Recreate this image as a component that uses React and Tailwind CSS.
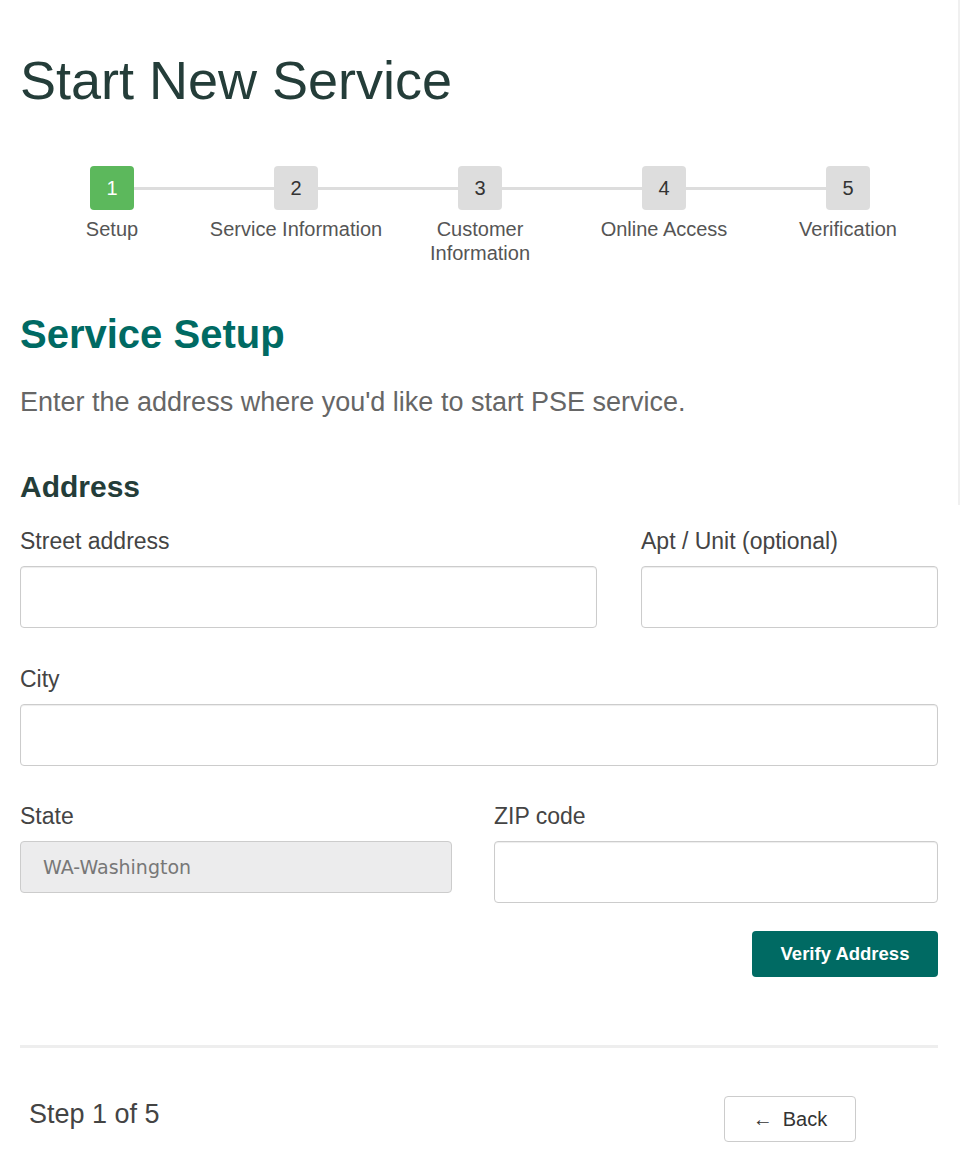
import React from "react";

const steps = [
  { n: 1, label: "Setup", active: true },
  { n: 2, label: "Service Information" },
  { n: 3, label: "Customer Information" },
  { n: 4, label: "Online Access" },
  { n: 5, label: "Verification" },
];

const inputCls =
  "block w-full h-[62px] rounded-[4px] border border-[#cccccc] bg-white shadow-[inset_0_1px_1px_rgba(0,0,0,0.075)]";

function Field({ label, className = "", children }) {
  return (
    <div className={className}>
      <label className="block text-[23px] leading-[28px] text-[#444444]">{label}</label>
      <div className="mt-[11px]">{children}</div>
    </div>
  );
}

export default function App() {
  return (
    <div className="flex bg-white font-['Liberation_Sans',Arial,sans-serif] min-h-[1173px]">
      <div className="w-[958px] px-5">
        {/* Title */}
        <h1 className="pt-[50px] text-[54px] leading-[60px] text-[#243d39]">Start New Service</h1>

        {/* Stepper */}
        <div className="mt-[56px] grid grid-cols-5 w-[920px]">
          {steps.map((s, i) => (
            <div key={s.n} className="flex flex-col items-center">
              <div className="flex w-full items-center">
                <div className={`flex-1 h-[3px] ${i === 0 ? "bg-transparent" : "bg-[#dddddd]"}`} />
                <div
                  className={`flex h-[44px] w-[44px] items-center justify-center rounded-[4px] text-[20px] ${
                    s.active ? "bg-[#5cb85c] text-white" : "bg-[#dddddd] text-[#333333]"
                  }`}
                >
                  {s.n}
                </div>
                <div className={`flex-1 h-[3px] ${i === steps.length - 1 ? "bg-transparent" : "bg-[#dddddd]"}`} />
              </div>
              <div className="mt-[7px] px-1 text-center text-[20px] leading-[24px] text-[#555555]">{s.label}</div>
            </div>
          ))}
        </div>

        {/* Section */}
        <h2 className="mt-[45px] text-[40px] leading-[48px] font-bold text-[#006a63]">Service Setup</h2>
        <p className="mt-[28px] text-[27px] leading-[32px] text-[#666666]">
          Enter the address where you'd like to start PSE service.
        </p>

        <h3 className="mt-[51px] text-[30px] leading-[36px] font-bold text-[#243d39]">Address</h3>

        <div className="mt-[22px] grid grid-cols-[577px_297px] justify-between">
          <Field label="Street address">
            <input className={inputCls} />
          </Field>
          <Field label="Apt / Unit (optional)">
            <input className={inputCls} />
          </Field>
        </div>

        <Field label="City" className="mt-[37px]">
          <input className={inputCls} />
        </Field>

        <div className="mt-[36px] grid grid-cols-[432px_444px] justify-between items-start">
          <Field label="State">
            <div className="flex h-[52px] items-center rounded-[4px] border border-[#cccccc] bg-[#ececed] pl-[22px] font-['DejaVu_Sans',Verdana,sans-serif] text-[19px] text-[#777777]">
              WA-Washington
            </div>
          </Field>
          <Field label="ZIP code">
            <input className={inputCls} />
          </Field>
        </div>

        <div className="mt-[28px] flex justify-end">
          <button className="h-[46px] w-[186px] rounded-[4px] bg-[#006a63] text-[18.5px] font-bold text-white">
            Verify Address
          </button>
        </div>

        <div className="mt-[68px] h-[3px] bg-[#eeeeee]" />

        {/* Footer */}
        <div className="mt-[48px] flex items-start justify-between pl-[9px] pr-[82px]">
          <div className="mt-[3px] text-[27px] leading-[30px] text-[#444444]">Step 1 of 5</div>
          <button className="flex h-[46px] w-[132px] items-center justify-center gap-[10px] rounded-[4px] border border-[#cccccc] bg-white text-[20px] text-[#333333]">
            <span>←</span>
            <span>Back</span>
          </button>
        </div>
      </div>
      <div className="w-[2px] h-[505px] bg-[#f0f0f0]" />
    </div>
  );
}
